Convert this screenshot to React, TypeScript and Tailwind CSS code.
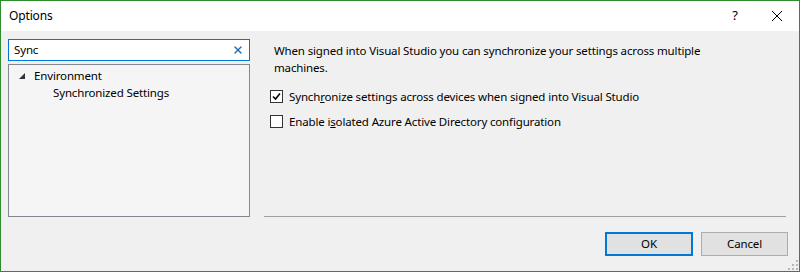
import { X } from "lucide-react";

const font = { fontFamily: '"Segoe UI", "Noto Sans", sans-serif' };

const Checkbox = ({ checked }: { checked: boolean }) => (
  <span className="flex h-[13px] w-[13px] shrink-0 items-center justify-center border border-[#333333] bg-white">
    {checked && (
      <svg width="9" height="9" viewBox="0 0 9 9">
        <path d="M1 4.5 L3.5 7 L8 1.5" fill="none" stroke="#000" strokeWidth="1.6" />
      </svg>
    )}
  </span>
);

export default function App() {
  return (
    <div
      className="flex h-[272px] w-[800px] flex-col border border-[#2e8b2e] bg-[#f0f0f0] text-[11.5px] tracking-[-0.15px] text-black"
      style={font}
    >
      {/* title bar */}
      <div className="flex h-[30px] shrink-0 items-center bg-white pl-[8px]">
        <span className="text-[12px]">Options</span>
        <div className="ml-auto flex items-center">
          <span className="w-[20px] text-center text-[13px]">?</span>
          <span className="ml-[24px] mr-[14px] flex w-[16px] justify-center">
            <svg width="12" height="12" viewBox="0 0 12 12">
              <path d="M1 1 L11 11 M11 1 L1 11" stroke="#000" strokeWidth="1" />
            </svg>
          </span>
        </div>
      </div>

      <div className="flex h-[186px] shrink-0">
        {/* left column */}
        <div className="ml-[7px] mt-[8px] flex w-[242px] flex-col gap-[3px]">
          <div className="flex h-[22px] items-center border border-[#0078d7] bg-white pl-[5px] pr-[5px]">
            <span>Sync</span>
            <X className="ml-auto h-[12px] w-[12px] text-[#1e73be]" strokeWidth={3} />
          </div>
          <div className="h-[153px] border border-[#828790] bg-[#f5f5f5] pt-[2px]">
            <div className="flex h-[17px] items-center pl-[10px]">
              <svg width="6" height="6" viewBox="0 0 6 6" className="mr-[9px]">
                <path d="M6 0 L6 6 L0 6 Z" fill="#333" />
              </svg>
              <span>Environment</span>
            </div>
            <div className="flex h-[17px] items-center pl-[44px]">Synchronized Settings</div>
          </div>
        </div>

        {/* right column */}
        <div className="ml-[14px] mr-[13px] flex flex-1 flex-col border-b border-[#a0a0a0] pl-[10px] pt-[11px]">
          <p className="w-[450px] leading-[17px]">
            When signed into Visual Studio you can synchronize your settings across multiple machines.
          </p>
          <label className="ml-[-4px] mt-[12px] flex items-center gap-[6px]">
            <Checkbox checked />
            <span>
              Synch<span className="underline">r</span>onize settings across devices when signed into Visual Studio
            </span>
          </label>
          <label className="ml-[-4px] mt-[8px] flex items-center gap-[6px]">
            <Checkbox checked={false} />
            <span>
              Enable i<span className="underline">s</span>olated Azure Active Directory configuration
            </span>
          </label>
        </div>
      </div>

      {/* buttons */}
      <div className="relative flex flex-1 items-start justify-end gap-[8px] pr-[11px] pt-[15px]">
        <button className="h-[24px] w-[88px] border-2 border-[#0078d7] bg-[#e1e1e1]">OK</button>
        <button className="h-[24px] w-[87px] border border-[#adadad] bg-[#e1e1e1]">Cancel</button>
        <svg width="10" height="10" viewBox="0 0 10 10" className="absolute bottom-[1px] right-[1px]">
          {[
            [8, 0],
            [8, 4],
            [4, 4],
            [8, 8],
            [4, 8],
            [0, 8],
          ].map(([x, y]) => (
            <rect key={`${x}-${y}`} x={x} y={y} width="2" height="2" fill="#b8b8b8" />
          ))}
        </svg>
      </div>
    </div>
  );
}
